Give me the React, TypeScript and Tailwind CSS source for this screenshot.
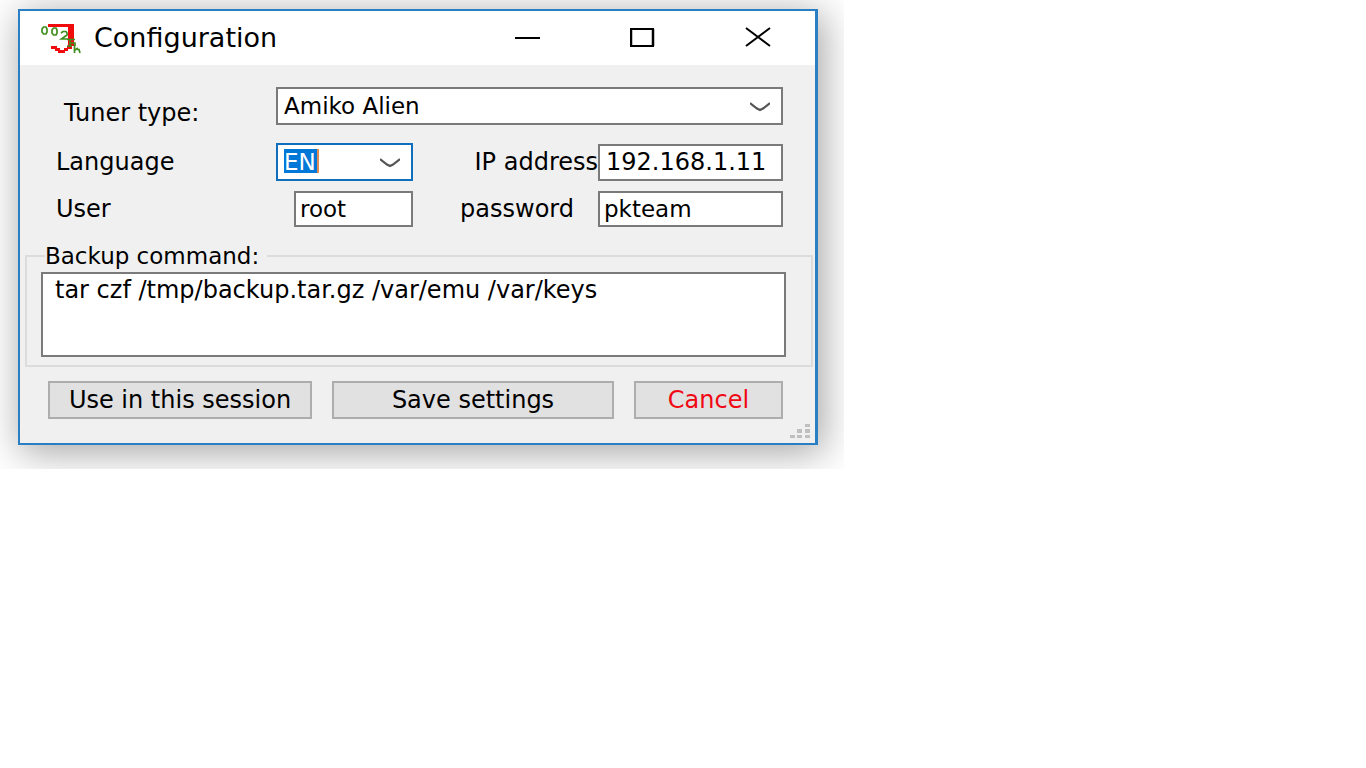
import type { ReactNode } from 'react';

const fieldClass =
  'block w-full rounded-none border-2 border-[#7a7a7a] bg-white leading-6 text-black outline-none';

const buttonClass =
  'h-[38px] border-2 border-[#adadad] bg-[#e1e1e1] text-center text-2xl leading-6 whitespace-nowrap';

const tunerTypes = ['Amiko Alien'];
const languages = ['EN'];

function Logo() {
  return (
    <svg width="42" height="32" viewBox="0 0 42 32" aria-hidden="true">
      <path d="M8 2H34V24H32V27H28V29H25V31H18V29H15V27H11V24H17V26H20V28H24V26H27V24H28V5H8Z" fill="#f00c0c" />
      <g fill="none" stroke="#3f8f1c" strokeWidth="1.7">
        <path d="M3.500 5H6L7 7V10L6 12H3.500L2 10V7Z" />
        <path d="M13.500 6H16L17 8V11L16 13H13.500L12 11V8Z" />
        <path d="M21 11L23 9.500H26L27 11V13L21.500 17H28" />
        <path d="M27 17.500H35M30 17V25M30 21H35V24M27 24H32" />
        <path d="M34.500 23V31M35 28L38 26M37 27.500H39L40 31" />
      </g>
    </svg>
  );
}

function Chevron() {
  return (
    <svg
      className="pointer-events-none absolute top-3 right-[13px]"
      width="20"
      height="14"
      viewBox="0 0 20 14"
      fill="none"
      stroke="#555"
      strokeWidth="2.2"
      aria-hidden="true"
    >
      <path d="M0 4L7 9.500L10 11L13 9.500L20 4" />
    </svg>
  );
}

function TitleButton({ label, children }: { label: string; children: ReactNode }) {
  return (
    <button type="button" aria-label={label} className="flex h-full w-[115px] items-center justify-center pb-[2px]">
      <svg width="26" height="20" viewBox="0 0 26 20" fill="none" stroke="black" strokeWidth="2">
        {children}
      </svg>
    </button>
  );
}

function TitleBar() {
  return (
    <header className="flex h-[54px] items-center bg-white pl-5">
      <Logo />
      <h1 className="ml-3 flex-1 text-[27px] leading-8">Configuration</h1>
      <div className="flex h-full">
        <TitleButton label="Minimize">
          <path d="M0 11H25" />
        </TitleButton>
        <TitleButton label="Maximize">
          <path d="M0 2H24M0 19H24" />
          <path d="M1 2V19M23 2V19" strokeWidth="2.500" />
        </TitleButton>
        <TitleButton label="Close">
          <path d="M1 1L25 19M25 1L1 19" />
        </TitleButton>
      </div>
    </header>
  );
}

export default function App() {
  return (
    <div className="w-full max-w-[844px] overflow-hidden bg-white pt-[9px] pr-[26px] pb-6 pl-[18px] font-['DejaVu_Sans',sans-serif] text-black">
      <main className="border-2 border-r-3 border-[#2a7fc4] bg-[#f0f0f0] shadow-[4px_6px_36px_2px_rgba(0,0,0,0.35)]">
        <TitleBar />

        <form onSubmit={(e) => e.preventDefault()}>
          <div className="space-y-[10px] pt-[22px] pr-8 pl-9 text-2xl leading-6">
            <div className="mb-[18px] flex">
              <label htmlFor="tuner" className="w-[220px] pt-[14px] pl-2">
                Tuner type:
              </label>
              <div className="relative flex-1">
                <select id="tuner" className={`${fieldClass} h-[38px] appearance-none pl-[6px] text-[23px]`}>
                  {tunerTypes.map((tuner) => (
                    <option key={tuner}>{tuner}</option>
                  ))}
                </select>
                <Chevron />
              </div>
            </div>

            <div className="flex items-center">
              <label htmlFor="language" className="w-[220px]">
                Language
              </label>
              <div className="relative w-[137px]">
                {/* The background strip is the selection behind the value */}
                <select
                  id="language"
                  className="block h-[38px] w-full appearance-none rounded-none border-2 border-[#0f6fbd] bg-white bg-[linear-gradient(to_right,#0078d7_33px,#e08a50_33px)] bg-[length:35px_24px] bg-[position:6px_4px] bg-no-repeat pl-[6px] text-[23px] leading-6 text-white outline-none"
                >
                  {languages.map((language) => (
                    <option key={language}>{language}</option>
                  ))}
                </select>
                <Chevron />
              </div>
              <label htmlFor="ip" className="flex-1 text-right whitespace-nowrap">
                IP address
              </label>
              <div className="w-[185px]">
                <input
                  id="ip"
                  type="text"
                  defaultValue="192.168.1.11"
                  className={`${fieldClass} h-[37px] pl-[6px] text-2xl`}
                />
              </div>
            </div>

            <div className="flex items-center">
              <label htmlFor="user" className="w-[238px]">
                User
              </label>
              <div className="w-[119px]">
                <input id="user" type="text" defaultValue="root" className={`${fieldClass} h-9 pl-1 text-[23px]`} />
              </div>
              <label htmlFor="password" className="flex-1 pr-6 text-right">
                password
              </label>
              <div className="w-[185px]">
                <input id="password" type="text" defaultValue="pkteam" className={`${fieldClass} h-9 pl-1 text-[23px]`} />
              </div>
            </div>
          </div>

          <fieldset className="mx-[5px] mt-[17px] mr-[2px] border-2 border-[#dcdcdc] pr-[25px] pb-2 pl-[14px]">
            <legend className="ml-1 pr-2 text-[23px] leading-6">
              <label htmlFor="backup">Backup command:</label>
            </legend>
            <textarea
              id="backup"
              defaultValue="tar czf /tmp/backup.tar.gz /var/emu /var/keys"
              className={`${fieldClass} mt-1 h-[85px] resize-none px-3 pt-1 text-2xl`}
            />
          </fieldset>

          <div className="flex pt-[14px] pr-8 pl-7">
            <button type="submit" className={`${buttonClass} w-[264px]`}>
              Use in this session
            </button>
            <button type="button" className={`${buttonClass} mx-5 flex-1`}>
              Save settings
            </button>
            <button type="button" className={`${buttonClass} w-[149px] text-[#f00814]`}>
              Cancel
            </button>
          </div>

          <div className="flex h-6 items-end justify-end pr-1 pb-1">
            <svg width="21" height="15" viewBox="0 0 21 15" fill="#bfbfbf" aria-hidden="true">
              <path d="M15 0h5v3h-5zM7 5h5v4H7zM15 5h5v4h-5zM0 11h5v3H0zM7 11h5v3H7zM15 11h5v3h-5z" />
            </svg>
          </div>
        </form>
      </main>
    </div>
  );
}
